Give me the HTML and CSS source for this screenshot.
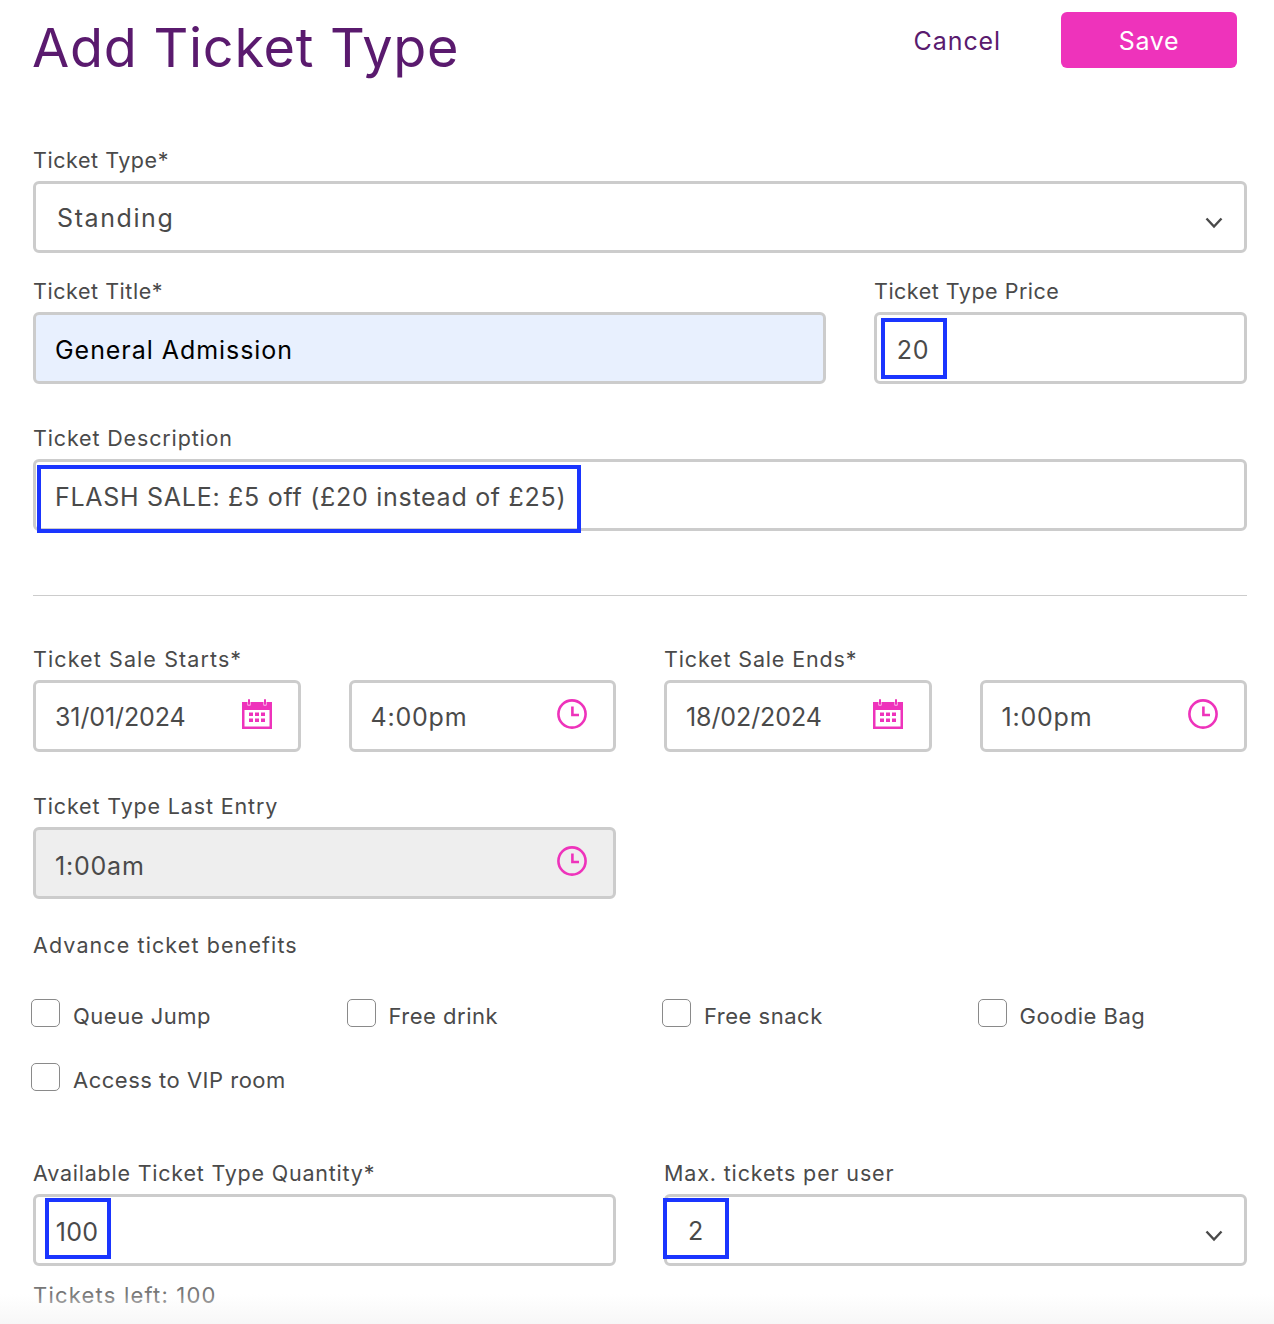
FILE: index.html
```html
<!DOCTYPE html>
<html lang="en">
<head>
<meta charset="utf-8">
<title>Add Ticket Type</title>
<link rel="stylesheet" href="styles.css">
</head>
<body>
<svg class="sprite" width="0" height="0" aria-hidden="true">
  <symbol id="clock" viewBox="0 0 32 32">
    <circle cx="16" cy="16" r="13.6" fill="none" stroke="currentColor" stroke-width="2.6"/>
    <path d="M16.4 8.5V17H23" fill="none" stroke="currentColor" stroke-width="2.6"/>
  </symbol>
  <symbol id="cal" viewBox="0 0 32 32">
    <path fill="currentColor" fill-rule="evenodd" d="M1 4h5.5v3.5h3V4h13v3.5h3V4H31v27H1zM3.500 12v16.500h25V12z"/>
    <rect x="7" y="1" width="2" height="6" rx="1" fill="currentColor"/>
    <rect x="23" y="1" width="2" height="6" rx="1" fill="currentColor"/>
    <path fill="currentColor" d="M8 14.500h4v3.500H8zM14 14.500h4v3.500h-4zM20 14.500h4v3.500h-4zM8 20.500h4V24H8zM14 20.500h4V24h-4zM20 20.500h4V24h-4z"/>
  </symbol>
  <symbol id="chev" viewBox="0 0 18 12">
    <path d="M1.500 1.500 9 9.500l7.500-8" fill="none" stroke="currentColor" stroke-width="2.400"/>
  </symbol>
</svg>

<main class="page">
  <header class="head">
    <h1 class="title">Add Ticket Type</h1>
    <div class="actions">
      <a class="cancel">Cancel</a>
      <button class="save" type="button">Save</button>
    </div>
  </header>

  <section class="group first">
    <label class="label snug">Ticket Type*</label>
    <div class="field select">
      <span class="val standing">Standing</span>
      <svg class="chev"><use href="#chev"/></svg>
    </div>
  </section>

  <section class="row-title group tight">
    <div>
      <label class="label snug">Ticket Title*</label>
      <div class="field filled"><span class="val dark">General Admission</span></div>
    </div>
    <div>
      <label class="label price-label">Ticket Type Price</label>
      <div class="field"><span class="val mark mark-price">20</span></div>
    </div>
  </section>

  <section class="group">
    <label class="label">Ticket Description</label>
    <div class="field"><span class="val mark mark-desc">FLASH SALE: £5 off (£20 instead of £25)</span></div>
  </section>

  <hr class="rule">

  <section class="row-four">
    <div class="pair">
      <label class="label span2 wide">Ticket Sale Starts*</label>
      <div class="field"><span class="val date">31/01/2024</span><svg class="ico cal"><use href="#cal"/></svg></div>
      <div class="field"><span class="val">4:00pm</span><svg class="ico"><use href="#clock"/></svg></div>
    </div>
    <div class="pair">
      <label class="label span2">Ticket Sale Ends*</label>
      <div class="field"><span class="val date">18/02/2024</span><svg class="ico cal"><use href="#cal"/></svg></div>
      <div class="field"><span class="val">1:00pm</span><svg class="ico"><use href="#clock"/></svg></div>
    </div>
  </section>

  <section class="group half">
    <label class="label">Ticket Type Last Entry</label>
    <div class="field disabled"><span class="val lower">1:00am</span><svg class="ico"><use href="#clock"/></svg></div>
  </section>

  <section class="benefits">
    <div class="label wide">Advance ticket benefits</div>
    <div class="checks">
      <label class="check"><span class="box"></span><span class="check-text">Queue Jump</span></label>
      <label class="check"><span class="box"></span><span class="check-text">Free drink</span></label>
      <label class="check"><span class="box"></span><span class="check-text">Free snack</span></label>
      <label class="check"><span class="box"></span><span class="check-text">Goodie Bag</span></label>
      <label class="check"><span class="box"></span><span class="check-text">Access to VIP room</span></label>
    </div>
  </section>

  <section class="row-two">
    <div>
      <label class="label qty-label">Available Ticket Type Quantity*</label>
      <div class="field"><span class="val mark mark-qty">100</span></div>
      <p class="left">Tickets left: 100</p>
    </div>
    <div>
      <label class="label">Max. tickets per user</label>
      <div class="field select"><span class="val mark mark-max">2</span><svg class="chev"><use href="#chev"/></svg></div>
    </div>
  </section>
</main>
<div class="fade"></div>
</body>
</html>
```

FILE: styles.css
```css
* { box-sizing: border-box; }
html, body { margin: 0; padding: 0; background: #fff; }
body {
  height: 1324px;
  overflow: hidden;
  position: relative;
  font-family: Inter, "Liberation Sans", sans-serif;
  color: #4a4a4a;
}
.sprite { position: absolute; }
.page { padding: 12px 27px 0 33px; }

.head { display: flex; justify-content: space-between; align-items: flex-start; height: 135px; padding-right: 10px; }
.title { margin: 0 0 0 -1px; font-size: 54px; line-height: 72px; font-weight: 400; color: #5a1a6e; letter-spacing: 0.72px; }
.actions { display: flex; align-items: flex-start; gap: 60px; }
.cancel { font-size: 25px; line-height: 59px; color: #5a1a6e; letter-spacing: 0.9px; }
.save {
  width: 176px; height: 56px; padding: 2px 0 0; border: 0; border-radius: 6px;
  background: #ee33bb; color: #fff;
  font: 400 25px/54px Inter, "Liberation Sans", sans-serif;
  letter-spacing: 0.7px;
}

.label { display: block; height: 26px; margin-bottom: 8px; font-size: 21.500px; line-height: 26px; font-weight: 400; letter-spacing: 0.85px; color: #4a4a4a; }
.price-label { letter-spacing: 0.5px; }
.snug { letter-spacing: 0.55px; }
.wide { letter-spacing: 1.100px; }
.qty-label { letter-spacing: 0.78px; }

.field {
  position: relative;
  height: 72px;
  display: flex; align-items: center; justify-content: space-between;
  padding: 0 25px 0 19px;
  border: 3px solid #ccc;
  border-radius: 6px;
  background: #fff;
}
.filled { background: #e8f0fe; }
.disabled { background: #eee; }
.val { font-size: 25px; line-height: 32px; letter-spacing: 0.8px; color: #4a4a4a; white-space: nowrap; padding-top: 2px; }
.dark { color: #000; padding-top: 4px; letter-spacing: 0.95px; }
.standing { padding-left: 2px; padding-top: 2px; letter-spacing: 1.600px; }
.date { letter-spacing: -0.1px; }
.lower { padding-top: 6px; }
.select { padding-right: 21px; }

.mark { position: absolute; display: flex; align-items: center; justify-content: center; border: 4px solid #1a35ff; }
.mark-price { left: 4px; top: 3px; width: 66px; height: 61px; padding: 2px 2px 0 0; }
.mark-desc { left: 1px; top: 3px; width: 544px; height: 68px; padding: 0 0 4px 14px; letter-spacing: 0.72px; justify-content: flex-start; }
.mark-qty { left: 9px; top: 1px; width: 66px; height: 61px; padding: 6px 2px 0 0; letter-spacing: 0.3px; }
.mark-max { left: -4px; top: 1px; width: 66px; height: 61px; padding: 4px 0 0; }

.chev { width: 18px; height: 12px; color: #4a4a4a; margin: 12px 0 0 auto; }
.ico { width: 32px; height: 32px; color: #ee33bb; margin: -4px 0 0; flex: none; }

.group { margin-top: 41px; }
.first { margin-top: 0; }
.tight { margin-top: 25px; }
.half { width: 583px; }

.row-title { display: grid; grid-template-columns: 793px 373px; gap: 48px; }

.rule { margin: 64px 0 50px; height: 1px; border: 0; background: #ccc; }

.row-four, .row-two { display: grid; grid-template-columns: 1fr 1fr; gap: 48px; }
.pair { display: grid; grid-template-columns: 1fr 1fr; column-gap: 48px; }
.span2 { grid-column: 1 / -1; }

.benefits { margin-top: 33px; }
.benefits .label { margin-bottom: 41px; }
.checks { display: grid; grid-template-columns: repeat(4, 1fr); column-gap: 48px; row-gap: 36px; }
.check { display: flex; align-items: center; height: 28px; margin-left: -2px; font-size: 22px; letter-spacing: 0.5px; color: #4a4a4a; }
.check-text { padding-top: 6px; }
.box { width: 29px; height: 28px; margin-right: 13px; border: 1px solid #8a8a8a; border-radius: 5px; background: #fff; flex: none; }

.row-two { margin-top: 69px; }
.left { margin: 16px 0 0; font-size: 22px; line-height: 26px; letter-spacing: 1.2px; color: #777; }

.fade { position: absolute; left: 0; right: 0; bottom: 0; height: 30px; background: linear-gradient(rgba(247,247,247,0), #f7f7f7); pointer-events: none; }
```
